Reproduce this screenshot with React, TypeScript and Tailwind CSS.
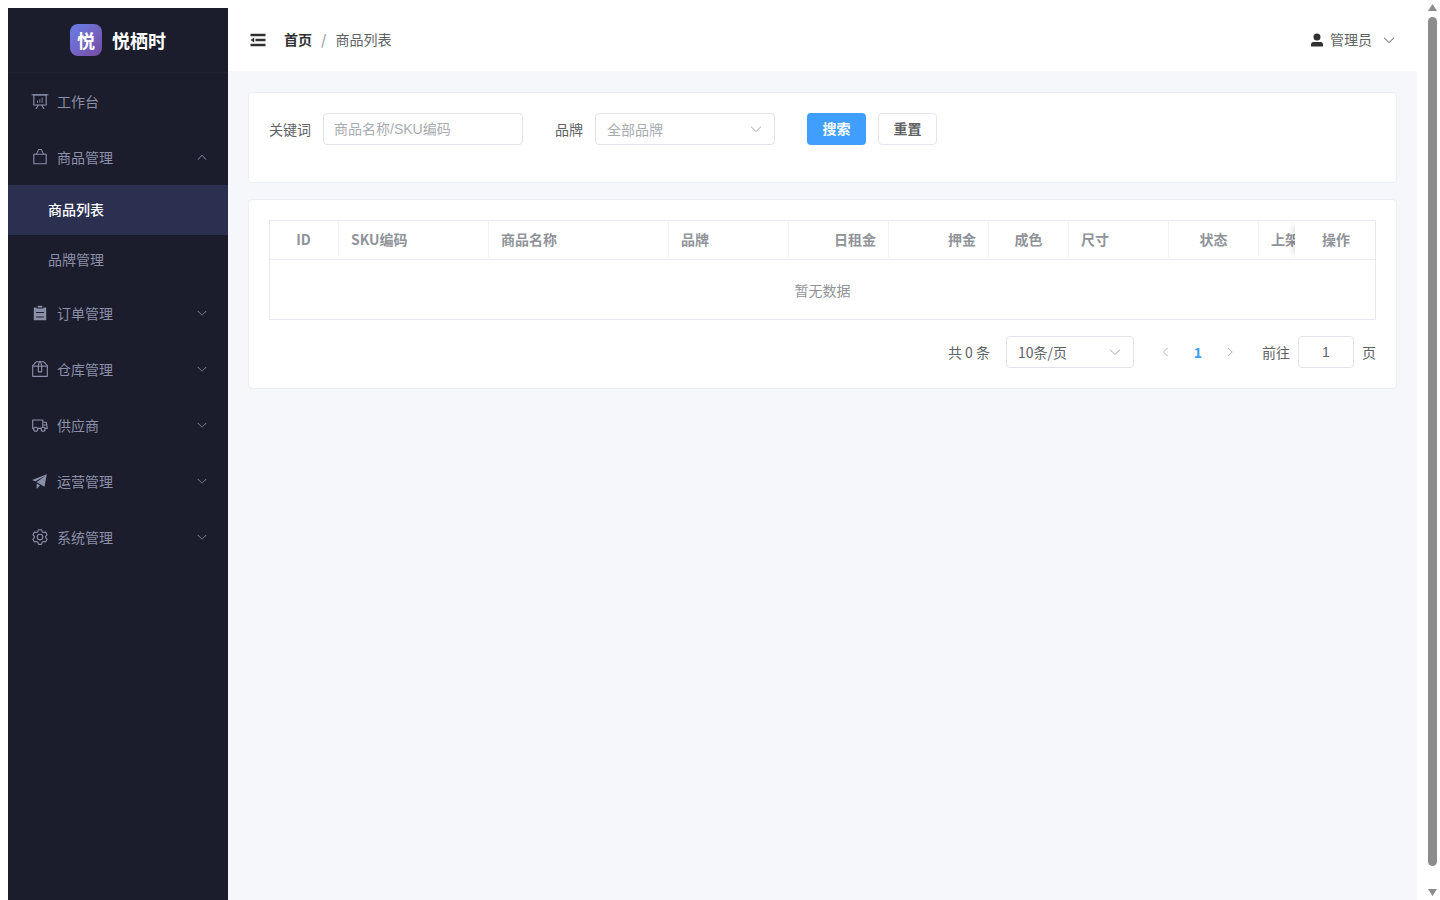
import React from 'react';

// Element-style icon, drawn in a 1024 box
const Icon: React.FC<{ d: string | string[]; className?: string }> = ({ d, className = '' }) => (
  <svg viewBox="0 0 1024 1024" fill="currentColor" className={className}>
    {(Array.isArray(d) ? d : [d]).map((p, i) => (
      <path key={i} d={p} />
    ))}
  </svg>
);

const ARROW_DOWN =
  'M831.872 340.864 512 652.672 192.128 340.864a30.592 30.592 0 0 0-42.752 0 29.12 29.12 0 0 0 0 41.6L489.664 714.24a32 32 0 0 0 44.672 0l340.288-331.712a29.12 29.12 0 0 0 0-41.728 30.592 30.592 0 0 0-42.752 0z';
const ARROW_UP =
  'm488.832 344.32-339.84 356.672a32 32 0 0 0 0 44.16l.384.384a29.44 29.44 0 0 0 42.688 0l320-335.872 319.872 335.872a29.44 29.44 0 0 0 42.688 0l.384-.384a32 32 0 0 0 0-44.16L535.168 344.32a32 32 0 0 0-46.336 0z';
const ARROW_LEFT =
  'M609.408 149.376 277.76 489.6a32 32 0 0 0 0 44.672l331.648 340.352a29.12 29.12 0 0 0 41.728 0 30.592 30.592 0 0 0 0-42.752L339.264 511.936l311.872-319.872a30.592 30.592 0 0 0 0-42.688 29.12 29.12 0 0 0-41.728 0z';
const ARROW_RIGHT =
  'M340.864 149.312a30.592 30.592 0 0 0 0 42.752L652.736 512 340.864 831.872a30.592 30.592 0 0 0 0 42.752 29.12 29.12 0 0 0 41.728 0L714.24 534.336a32 32 0 0 0 0-44.672L382.592 149.376a29.12 29.12 0 0 0-41.728 0z';
const FOLD = 'M896 192H128v128h768V192zm0 256H384v128h512V448zm0 256H128v128h768V704zM320 384 128 512l192 128V384z';
const USER =
  'M288 320a224 224 0 1 0 448 0 224 224 0 1 0-448 0zm544 608H160a32 32 0 0 1-32-32v-96a160 160 0 0 1 160-160h448a160 160 0 0 1 160 160v96a32 32 0 0 1-32 32z';
const BOARD = [
  'M32 128h960v64H32z',
  'M192 192v512h640V192H192zm-64-64h768v640H128V128z',
  'M322.176 960H248.32l144.64-250.56 55.424 32L322.176 960zm453.888 0h-73.856L576 741.44l55.424-32L776.064 960z',
  'M352 480h48v128h-48zM480 416h48v192h-48zM608 320h48v288h-48z',
];
const BAG = 'M128 320h768v610H128zM192 384v482h640V384zM284 330 420 57h184l136 273h-64L570 120H454L348 330z';
const LIST = 'M704 192h160v736H160V192h160v64h384v-64zM288 512h448v-64H288v64zm0 256h448v-64H288v64zm96-576V96h256v96H384z';
const BOX = [
  'M317.056 128 128 344.064V896h768V344.064L706.944 128H317.056zm-14.528-64h418.944a32 32 0 0 1 24.064 10.88l206.528 236.096A32 32 0 0 1 960 332.032V928a32 32 0 0 1-32 32H96a32 32 0 0 1-32-32V332.032a32 32 0 0 1 7.936-21.12L278.4 75.008A32 32 0 0 1 302.528 64z',
  'M64 320h896v64H64z',
  'M448 327.872V640h128V327.872L526.08 128h-28.16L448 327.872zM448 64h128l64 256v352a32 32 0 0 1-32 32H416a32 32 0 0 1-32-32V320l64-256z',
];
const VAN =
  'M128.896 736H96a32 32 0 0 1-32-32V224a32 32 0 0 1 32-32h576a32 32 0 0 1 32 32v96h164.544a32 32 0 0 1 31.616 27.136l54.144 352A32 32 0 0 1 922.688 736h-91.52a144 144 0 1 1-286.272 0H415.104a144 144 0 1 1-286.272 0zm23.36-64a143.872 143.872 0 0 1 239.488 0H568.32c17.088-25.6 42.24-45.376 71.744-55.808V256H128v416h24.256zm655.488 0h77.632l-19.648-128H704v64.896A144 144 0 0 1 807.744 672zm48.128-192-14.72-96H704v96h151.872zM688 832a80 80 0 1 0 0-160 80 80 0 0 0 0 160zm-416 0a80 80 0 1 0 0-160 80 80 0 0 0 0 160z';
const PROMOTION = 'm64 448 832-320-128 704-446.08-243.328L832 192 242.816 545.472 64 448zm256 512V657.024L512 768 320 960z';
const SETTING =
  'M600.704 64a32 32 0 0 1 30.464 22.208l35.2 109.376c14.784 7.232 28.928 15.36 42.432 24.512l112.384-24.192a32 32 0 0 1 34.432 15.36L944.32 364.8a32 32 0 0 1-4.032 37.504l-77.12 85.12a357.12 357.12 0 0 1 0 49.024l77.12 85.248a32 32 0 0 1 4.032 37.504l-88.704 153.6a32 32 0 0 1-34.432 15.296L708.8 803.904c-13.44 9.088-27.648 17.28-42.368 24.512l-35.264 109.376A32 32 0 0 1 600.704 960H423.296a32 32 0 0 1-30.464-22.208L357.696 828.48a351.616 351.616 0 0 1-42.56-24.64l-112.32 24.256a32 32 0 0 1-34.432-15.36L79.68 659.2a32 32 0 0 1 4.032-37.504l77.12-85.248a357.12 357.12 0 0 1 0-48.896l-77.12-85.248A32 32 0 0 1 79.68 364.8l88.704-153.6a32 32 0 0 1 34.432-15.296l112.32 24.256c13.568-9.152 27.776-17.408 42.56-24.64l35.2-109.312A32 32 0 0 1 423.232 64H600.64zm-23.424 64H446.72l-36.352 113.088-24.512 11.968a294.113 294.113 0 0 0-34.816 20.096l-22.656 15.36-116.224-25.088-65.28 113.152 79.68 88.192-1.92 27.136a293.12 293.12 0 0 0 0 40.192l1.92 27.136-79.808 88.192 65.344 113.152 116.224-25.024 22.656 15.296a294.113 294.113 0 0 0 34.816 20.096l24.512 11.968L446.72 896h130.688l36.48-113.152 24.448-11.904a288.282 288.282 0 0 0 34.752-20.096l22.592-15.296 116.288 25.024 65.28-113.152-79.744-88.192 1.92-27.136a293.12 293.12 0 0 0 0-40.256l-1.92-27.136 79.808-88.128-65.344-113.152-116.288 24.96-22.592-15.232a287.616 287.616 0 0 0-34.752-20.096l-24.448-11.904L577.344 128zM512 320a192 192 0 1 1 0 384 192 192 0 0 1 0-384zm0 64a128 128 0 1 0 0 256 128 128 0 0 0 0-256z';

const MenuItem: React.FC<{ icon: string | string[]; label: string; arrow?: string }> = ({ icon, label, arrow }) => (
  <div className="flex h-14 items-center pl-5 pr-5 text-sm text-[#8b8fa7]">
    <span className="mr-[5px] flex w-6 justify-center">
      <Icon d={icon} className="h-[18px] w-[18px]" />
    </span>
    <span className="flex-1">{label}</span>
    {arrow && <Icon d={arrow} className="h-3 w-3" />}
  </div>
);

const columns = [
  { label: 'ID', w: 'w-[69px] pr-[13px]', align: 'justify-center' },
  { label: 'SKU编码', w: 'w-[150px] pr-3', align: 'justify-start' },
  { label: '商品名称', w: 'w-[180px] pr-3', align: 'justify-start' },
  { label: '品牌', w: 'w-[120px] pr-3', align: 'justify-start' },
  { label: '日租金', w: 'w-[100px] pr-3', align: 'justify-end' },
  { label: '押金', w: 'w-[100px] pr-3', align: 'justify-end' },
  { label: '成色', w: 'w-[80px] pr-3', align: 'justify-center' },
  { label: '尺寸', w: 'w-[100px] pr-3', align: 'justify-start' },
  { label: '状态', w: 'w-[90px] pr-3', align: 'justify-center' },
  { label: '上架', w: 'w-[180px] pr-3', align: 'justify-start' },
];

export default function App() {
  return (
    <div className="flex h-screen overflow-hidden bg-white font-['Noto_Sans_CJK_SC','Noto_Sans',sans-serif]">
      <div className="flex min-w-0 flex-1 px-2 pt-2">
        <aside className="w-[220px] shrink-0 bg-[#1b1d2c]">
          <div className="flex h-[65px] items-center justify-center gap-2.5 border-b border-[#20232f]">
            <div className="flex h-8 w-8 items-center justify-center rounded-lg bg-gradient-to-br from-[#667eea] to-[#764ba2] text-lg font-bold text-white">
              悦
            </div>
            <span className="text-lg font-bold text-white">悦栖时</span>
          </div>
          <MenuItem icon={BOARD} label="工作台" />
          <MenuItem icon={BAG} label="商品管理" arrow={ARROW_UP} />
          <div className="flex h-[50px] items-center bg-[#2b3050] pb-0.5 pl-10 text-sm font-medium text-white">商品列表</div>
          <div className="flex h-[50px] items-center pb-0.5 pl-10 text-sm text-[#8b8fa7]">品牌管理</div>
          <MenuItem icon={LIST} label="订单管理" arrow={ARROW_DOWN} />
          <MenuItem icon={BOX} label="仓库管理" arrow={ARROW_DOWN} />
          <MenuItem icon={VAN} label="供应商" arrow={ARROW_DOWN} />
          <MenuItem icon={PROMOTION} label="运营管理" arrow={ARROW_DOWN} />
          <MenuItem icon={SETTING} label="系统管理" arrow={ARROW_DOWN} />
        </aside>

        <div className="flex min-w-0 flex-1 flex-col bg-[#f5f7fa]">
          <header className="flex h-[63px] shrink-0 items-center bg-white pl-5 pr-[21px]">
            <Icon d={FOLD} className="h-5 w-5 text-[#303133]" />
            <div className="ml-4 flex items-center pb-0.5 text-sm">
              <span className="font-bold text-[#303133]">首页</span>
              <span className="mx-[9px] font-bold text-[#a8abb2]">/</span>
              <span className="text-[#606266]">商品列表</span>
            </div>
            <div className="ml-auto flex items-center text-sm text-[#606266]">
              <Icon d={USER} className="h-4 w-4 text-[#303133]" />
              <span className="ml-[5px] pb-0.5">管理员</span>
              <Icon d={ARROW_DOWN} className="ml-2.5 h-3.5 w-3.5" />
            </div>
          </header>

          <main className="flex flex-col gap-4 px-5 pt-[21px]">
            <section className="rounded border border-[#ebeef5] bg-white p-5 pb-[37px]">
              <div className="flex items-center text-sm text-[#606266]">
                <span className="mr-3">关键词</span>
                <input
                  placeholder="商品名称/SKU编码"
                  className="h-8 w-[200px] rounded border border-[#e0e3ec] px-[10px] font-['Liberation_Sans','Noto_Sans_CJK_SC',sans-serif] text-sm outline-none placeholder:text-[#a8abb2]"
                />
                <span className="ml-8 mr-3">品牌</span>
                <div className="flex h-8 w-[180px] items-center justify-between rounded border border-[#e0e3ec] px-[11px] text-[#a8abb2]">
                  <span>全部品牌</span>
                  <Icon d={ARROW_DOWN} className="h-3.5 w-3.5" />
                </div>
                <button className="ml-8 h-8 w-[59px] rounded bg-[#409eff] pb-0.5 font-bold text-white">搜索</button>
                <button className="ml-3 h-8 w-[59px] rounded border border-[#e4e7ed] pb-0.5 font-bold text-[#606266]">重置</button>
              </div>
            </section>

            <section className="rounded border border-[#ebeef5] bg-white p-5">
              <div className="relative overflow-hidden border border-[#e7e9f2]">
                <div className="flex h-[39px] border-b border-[#ebeef5] pb-0.5 text-sm font-bold text-[#909399]">
                  {columns.map(c => (
                    <div key={c.label} className={`flex ${c.w} ${c.align} shrink-0 items-center border-r border-[#f2f3f8] pl-3`}>
                      <span className="whitespace-nowrap">{c.label}</span>
                    </div>
                  ))}
                </div>
                <div className="flex h-[59px] items-center justify-center text-sm text-[#909399]">暂无数据</div>
                <div className="absolute right-0 top-0 flex h-[38px] w-[80px] items-center justify-center bg-white pb-0.5 pl-0.5 text-sm font-bold text-[#909399] shadow-[-6px_0_6px_-4px_rgba(0,0,0,0.12)]">
                  操作
                </div>
              </div>

              <div className="mt-4 flex h-8 items-center justify-end text-sm text-[#606266]">
                <span>共 0 条</span>
                <div className="ml-4 flex h-8 w-[128px] items-center justify-between rounded border border-[#e0e3ec] px-[11px]">
                  <span>10条/页</span>
                  <Icon d={ARROW_DOWN} className="h-3.5 w-3.5 text-[#a8abb2]" />
                </div>
                <div className="ml-4 flex items-center">
                  <span className="flex w-8 justify-center text-[#a8abb2]">
                    <Icon d={ARROW_LEFT} className="h-3 w-3" />
                  </span>
                  <span className="flex w-8 justify-center font-bold text-[#409eff]">1</span>
                  <span className="flex w-8 justify-center text-[#a8abb2]">
                    <Icon d={ARROW_RIGHT} className="h-3 w-3" />
                  </span>
                </div>
                <span className="ml-4">前往</span>
                <input
                  defaultValue="1"
                  className="mx-2 h-8 w-14 rounded border border-[#e0e3ec] text-center font-['Liberation_Sans',sans-serif] text-sm text-[#606266] outline-none"
                />
                <span>页</span>
              </div>
            </section>
          </main>
        </div>
      </div>

      {/* page scrollbar */}
      <div className="flex h-screen w-[15px] shrink-0 flex-col items-center bg-white">
        <svg viewBox="0 0 9 17" className="h-[17px] w-[9px] shrink-0 fill-[#8c8c8c]">
          <path d="M4.5 4 9 11H0z" />
        </svg>
        <div className="w-[9px] flex-1 rounded-[5px] bg-[#8c8c8c]" />
        <svg viewBox="0 0 9 17" className="mt-[17px] h-[17px] w-[9px] shrink-0 fill-[#8c8c8c]">
          <path d="M0 6h9L4.5 13z" />
        </svg>
      </div>
    </div>
  );
}
